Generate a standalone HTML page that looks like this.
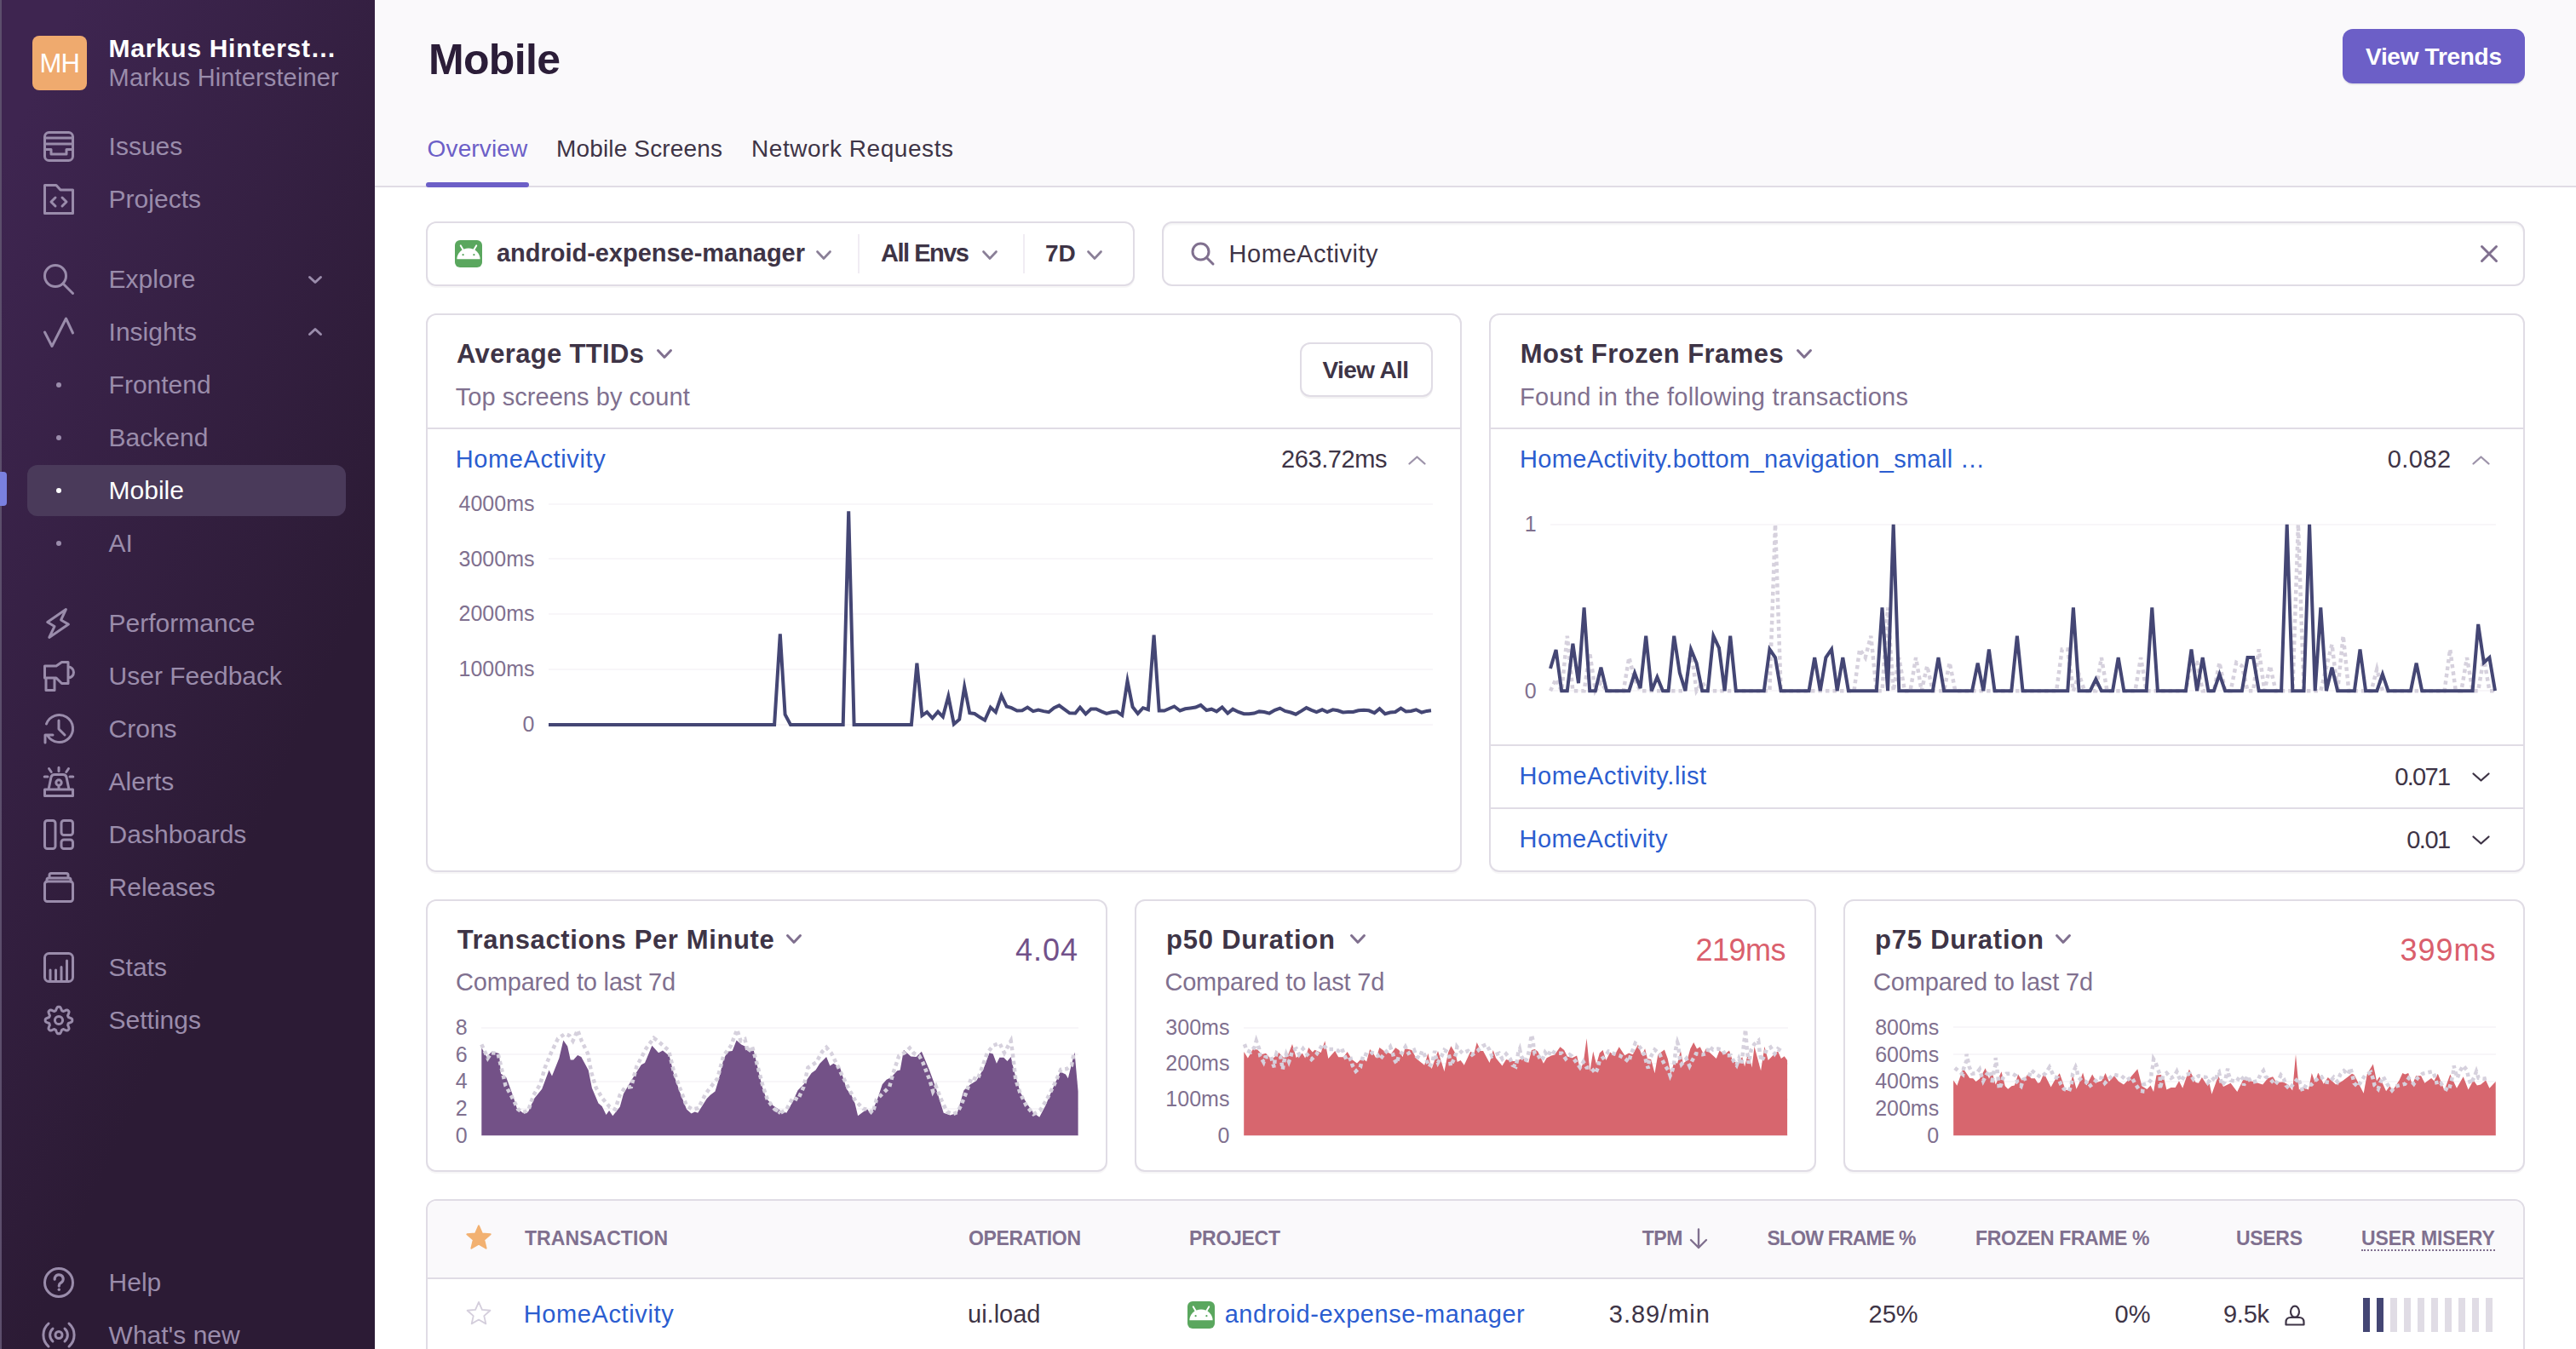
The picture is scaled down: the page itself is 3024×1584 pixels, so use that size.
<!DOCTYPE html>
<html><head><meta charset="utf-8"><style>
html,body{margin:0;padding:0;}
html{overflow:hidden;background:#fff;}
body{width:3024px;height:1584px;overflow:hidden;position:relative;background:#fff;font-family:"Liberation Sans",sans-serif;}
.t{position:absolute;white-space:nowrap;line-height:1;}
</style></head><body>
<div style="position:absolute;left:0px;top:0px;width:440px;height:1584px;background:linear-gradient(294.17deg,#2c1b35 35.57%,#3e2550 92.42%);"></div>
<div style="position:absolute;left:0px;top:0px;width:2px;height:1584px;background:#5c4e6c;"></div>
<div style="position:absolute;left:38px;top:42px;width:64px;height:64px;background:#EFAA6E;border-radius:8px;"></div>
<div class="t" style="top:59.46px;font-size:31px;color:#ffffff;letter-spacing:-0.719px;left:46.50px;">MH</div>
<div class="t" style="top:42.31px;font-size:30px;color:#ffffff;font-weight:700;letter-spacing:0.685px;left:127.60px;">Markus Hinterst…</div>
<div class="t" style="top:77.25px;font-size:29px;color:#9a8cab;letter-spacing:0.132px;left:127.60px;">Markus Hintersteiner</div>
<div style="position:absolute;left:32px;top:546px;width:374px;height:60px;background:#4a3a5a;border-radius:12px;"></div>
<div style="position:absolute;left:0px;top:554px;width:8px;height:40px;background:#7a80e0;border-radius:0 4px 4px 0;"></div>
<div class="t" style="top:156.60px;font-size:30px;color:#9a8cab;left:127.60px;">Issues</div>
<div class="t" style="top:218.60px;font-size:30px;color:#9a8cab;left:127.60px;">Projects</div>
<div class="t" style="top:312.61px;font-size:30px;color:#9a8cab;left:127.60px;">Explore</div>
<div class="t" style="top:374.61px;font-size:30px;color:#9a8cab;left:127.60px;">Insights</div>
<div class="t" style="top:436.61px;font-size:30px;color:#9a8cab;left:127.60px;">Frontend</div>
<div class="t" style="top:498.61px;font-size:30px;color:#9a8cab;left:127.60px;">Backend</div>
<div class="t" style="top:560.61px;font-size:30px;color:#ffffff;left:127.60px;">Mobile</div>
<div class="t" style="top:622.61px;font-size:30px;color:#9a8cab;left:127.60px;">AI</div>
<div class="t" style="top:716.61px;font-size:30px;color:#9a8cab;left:127.60px;">Performance</div>
<div class="t" style="top:778.61px;font-size:30px;color:#9a8cab;left:127.60px;">User Feedback</div>
<div class="t" style="top:840.61px;font-size:30px;color:#9a8cab;left:127.60px;">Crons</div>
<div class="t" style="top:902.61px;font-size:30px;color:#9a8cab;left:127.60px;">Alerts</div>
<div class="t" style="top:964.61px;font-size:30px;color:#9a8cab;left:127.60px;">Dashboards</div>
<div class="t" style="top:1026.61px;font-size:30px;color:#9a8cab;left:127.60px;">Releases</div>
<div class="t" style="top:1120.61px;font-size:30px;color:#9a8cab;left:127.60px;">Stats</div>
<div class="t" style="top:1182.61px;font-size:30px;color:#9a8cab;left:127.60px;">Settings</div>
<div class="t" style="top:1490.61px;font-size:30px;color:#9a8cab;left:127.60px;">Help</div>
<div class="t" style="top:1552.61px;font-size:30px;color:#9a8cab;left:127.60px;">What's new</div>
<div style="position:absolute;left:66px;top:449px;width:6px;height:6px;background:#9a8cab;border-radius:50%;"></div>
<div style="position:absolute;left:66px;top:511px;width:6px;height:6px;background:#9a8cab;border-radius:50%;"></div>
<div style="position:absolute;left:66px;top:573px;width:6px;height:6px;background:#ffffff;border-radius:50%;"></div>
<div style="position:absolute;left:66px;top:635px;width:6px;height:6px;background:#9a8cab;border-radius:50%;"></div>
<div style="position:absolute;left:440px;top:0px;width:2584px;height:218px;background:#FAF9FB;"></div>
<div style="position:absolute;left:440px;top:218px;width:2584px;height:2px;background:#E0DCE5;"></div>
<div class="t" style="top:45.47px;font-size:50px;color:#2B1D38;font-weight:700;letter-spacing:-0.669px;left:503.00px;">Mobile</div>
<div style="position:absolute;left:2750px;top:34px;width:214px;height:64px;background:#6C5FC7;border-radius:12px;box-shadow:0 2px 0 rgba(43,34,51,0.08);"></div>
<div class="t" style="top:52.50px;font-size:28px;color:#ffffff;font-weight:700;letter-spacing:-0.292px;left:2777.00px;">View Trends</div>
<div class="t" style="top:161.30px;font-size:28px;color:#6C5FC7;letter-spacing:0.142px;left:501.60px;">Overview</div>
<div class="t" style="top:161.30px;font-size:28px;color:#3E3446;letter-spacing:0.153px;left:653.00px;">Mobile Screens</div>
<div class="t" style="top:161.30px;font-size:28px;color:#3E3446;letter-spacing:0.547px;left:882.00px;">Network Requests</div>
<div style="position:absolute;left:500px;top:214px;width:121px;height:6px;background:#6C5FC7;border-radius:3px;"></div>
<div style="position:absolute;left:500px;top:260px;width:832px;height:76px;border:2px solid #E0DCE5;border-radius:12px;box-sizing:border-box;background:#fff;box-shadow:0 2px 0 rgba(43,34,51,0.04);"></div>
<svg style="position:absolute;left:534px;top:282px" width="32" height="32" viewBox="0 0 16 16"><rect width="16" height="16" rx="3" fill="#5aa75e"/><path d="M1.2 11.1 A6.8 6.4 0 0 1 14.8 11.1 Z" fill="#fff"/><path d="M5.2 6.3 L3.4 3.2 M10.8 6.3 L12.6 3.2" stroke="#fff" stroke-width="1.0" stroke-linecap="round"/><circle cx="4.8" cy="8.6" r="0.55" fill="#5aa75e"/><circle cx="11.2" cy="8.6" r="0.55" fill="#5aa75e"/></svg>
<div class="t" style="top:283.45px;font-size:29px;color:#3E3446;font-weight:700;letter-spacing:-0.027px;left:583.00px;">android-expense-manager</div>
<div style="position:absolute;left:1007px;top:275px;width:2px;height:46px;background:#F0ECF3;"></div>
<div style="position:absolute;left:1201px;top:275px;width:2px;height:46px;background:#F0ECF3;"></div>
<div class="t" style="top:283.45px;font-size:29px;color:#3E3446;font-weight:700;letter-spacing:-1.491px;left:1034.00px;">All Envs</div>
<div class="t" style="top:284.30px;font-size:28px;color:#3E3446;font-weight:700;left:1227.00px;">7D</div>
<div style="position:absolute;left:1364px;top:260px;width:1600px;height:76px;border:2px solid #E0DCE5;border-radius:12px;box-sizing:border-box;background:#fff;box-shadow:inset 0 2px 2px rgba(43,34,51,0.05);"></div>
<div class="t" style="top:283.95px;font-size:29px;color:#3E3446;letter-spacing:0.528px;left:1442.60px;">HomeActivity</div>
<div style="position:absolute;left:500px;top:368px;width:1216px;height:656px;border:2px solid #E0DCE5;border-radius:12px;box-sizing:border-box;background:#fff;box-shadow:0 2px 0 rgba(43,34,51,0.04);"></div>
<div style="position:absolute;left:1748px;top:368px;width:1216px;height:656px;border:2px solid #E0DCE5;border-radius:12px;box-sizing:border-box;background:#fff;box-shadow:0 2px 0 rgba(43,34,51,0.04);"></div>
<div style="position:absolute;left:502px;top:502px;width:1212px;height:2px;background:#E0DCE5;"></div>
<div style="position:absolute;left:1750px;top:502px;width:1212px;height:2px;background:#E0DCE5;"></div>
<div style="position:absolute;left:1750px;top:874px;width:1212px;height:2px;background:#E0DCE5;"></div>
<div style="position:absolute;left:1750px;top:948px;width:1212px;height:2px;background:#E0DCE5;"></div>
<div class="t" style="top:399.76px;font-size:31px;color:#3E3446;font-weight:700;letter-spacing:0.342px;left:536.00px;">Average TTIDs</div>
<div class="t" style="top:452.15px;font-size:29px;color:#80708F;letter-spacing:0.051px;left:534.70px;">Top screens by count</div>
<div style="position:absolute;left:1526px;top:402px;width:156px;height:64px;border:2px solid #E0DCE5;border-radius:12px;box-sizing:border-box;background:#fff;box-shadow:0 2px 0 rgba(43,34,51,0.06);"></div>
<div class="t" style="top:421.30px;font-size:28px;color:#3E3446;font-weight:700;letter-spacing:-0.621px;left:1552.50px;">View All</div>
<div class="t" style="top:525.45px;font-size:29px;color:#2b5dd0;letter-spacing:0.619px;left:534.70px;">HomeActivity</div>
<div class="t" style="top:525.45px;font-size:29px;color:#3E3446;letter-spacing:-0.406px;right:1395.91px;text-align:right;">263.72ms</div>
<div class="t" style="top:399.76px;font-size:31px;color:#3E3446;font-weight:700;letter-spacing:0.446px;left:1784.70px;">Most Frozen Frames</div>
<div class="t" style="top:452.15px;font-size:29px;color:#80708F;letter-spacing:0.279px;left:1784.00px;">Found in the following transactions</div>
<div class="t" style="top:525.45px;font-size:29px;color:#2b5dd0;letter-spacing:0.354px;left:1784.00px;">HomeActivity.bottom_navigation_small …</div>
<div class="t" style="top:525.45px;font-size:29px;color:#3E3446;letter-spacing:0.484px;right:146.32px;text-align:right;">0.082</div>
<div class="t" style="top:897.35px;font-size:29px;color:#2b5dd0;letter-spacing:0.561px;left:1783.50px;">HomeActivity.list</div>
<div class="t" style="top:898.45px;font-size:29px;color:#3E3446;letter-spacing:-1.641px;right:148.44px;text-align:right;">0.071</div>
<div class="t" style="top:970.75px;font-size:29px;color:#2b5dd0;letter-spacing:0.438px;left:1783.50px;">HomeActivity</div>
<div class="t" style="top:972.45px;font-size:29px;color:#3E3446;letter-spacing:-1.479px;right:148.28px;text-align:right;">0.01</div>
<div style="position:absolute;left:500px;top:1056px;width:800px;height:320px;border:2px solid #E0DCE5;border-radius:12px;box-sizing:border-box;background:#fff;box-shadow:0 2px 0 rgba(43,34,51,0.04);"></div>
<div style="position:absolute;left:1332px;top:1056px;width:800px;height:320px;border:2px solid #E0DCE5;border-radius:12px;box-sizing:border-box;background:#fff;box-shadow:0 2px 0 rgba(43,34,51,0.04);"></div>
<div style="position:absolute;left:2164px;top:1056px;width:800px;height:320px;border:2px solid #E0DCE5;border-radius:12px;box-sizing:border-box;background:#fff;box-shadow:0 2px 0 rgba(43,34,51,0.04);"></div>
<div class="t" style="top:1088.46px;font-size:31px;color:#3E3446;font-weight:700;letter-spacing:0.624px;left:536.70px;">Transactions Per Minute</div>
<div class="t" style="top:1088.46px;font-size:31px;color:#3E3446;font-weight:700;letter-spacing:0.777px;left:1369.00px;">p50 Duration</div>
<div class="t" style="top:1088.46px;font-size:31px;color:#3E3446;font-weight:700;letter-spacing:0.777px;left:2201.00px;">p75 Duration</div>
<div class="t" style="top:1139.45px;font-size:29px;color:#80708F;letter-spacing:-0.174px;left:535.00px;">Compared to last 7d</div>
<div class="t" style="top:1139.45px;font-size:29px;color:#80708F;letter-spacing:-0.174px;left:1367.40px;">Compared to last 7d</div>
<div class="t" style="top:1139.45px;font-size:29px;color:#80708F;letter-spacing:-0.174px;left:2199.00px;">Compared to last 7d</div>
<div class="t" style="top:1097.53px;font-size:36px;color:#72518a;letter-spacing:0.984px;right:1758.02px;text-align:right;">4.04</div>
<div class="t" style="top:1097.53px;font-size:36px;color:#DA5F6D;letter-spacing:-0.508px;right:928.01px;text-align:right;">219ms</div>
<div class="t" style="top:1097.53px;font-size:36px;color:#DA5F6D;letter-spacing:0.992px;right:93.61px;text-align:right;">399ms</div>
<div style="position:absolute;left:500px;top:1408px;width:2464px;height:200px;border:2px solid #E0DCE5;border-radius:12px;box-sizing:border-box;background:#fff;overflow:hidden"><div style="height:90px;background:#FAF9FB;border-bottom:2px solid #E0DCE5"></div></div>
<div class="t" style="top:1443.33px;font-size:23px;color:#80708F;font-weight:700;letter-spacing:0.062px;left:616.00px;">TRANSACTION</div>
<div class="t" style="top:1443.33px;font-size:23px;color:#80708F;font-weight:700;letter-spacing:-0.379px;left:1137.00px;">OPERATION</div>
<div class="t" style="top:1443.33px;font-size:23px;color:#80708F;font-weight:700;letter-spacing:-0.273px;left:1396.00px;">PROJECT</div>
<div class="t" style="top:1443.33px;font-size:23px;color:#80708F;font-weight:700;letter-spacing:-0.817px;left:2074.50px;">SLOW FRAME %</div>
<div class="t" style="top:1443.33px;font-size:23px;color:#80708F;font-weight:700;letter-spacing:-0.388px;left:2319.00px;">FROZEN FRAME %</div>
<div class="t" style="top:1443.33px;font-size:23px;color:#80708F;font-weight:700;letter-spacing:-0.312px;left:2625.00px;">USERS</div>
<div class="t" style="top:1443.33px;font-size:23px;color:#80708F;font-weight:700;letter-spacing:-0.523px;left:1927.80px;">TPM</div>
<div class="t" style="top:1443.33px;font-size:23px;color:#80708F;font-weight:700;letter-spacing:-0.082px;left:2772.00px;">USER MISERY</div>
<div class="t" style="top:1529.45px;font-size:29px;color:#2b5dd0;letter-spacing:0.619px;left:614.70px;">HomeActivity</div>
<div class="t" style="top:1529.45px;font-size:29px;color:#3E3446;left:1136.00px;">ui.load</div>
<div class="t" style="top:1529.45px;font-size:29px;color:#2b5dd0;letter-spacing:0.541px;left:1437.70px;">android-expense-manager</div>
<div class="t" style="top:1529.45px;font-size:29px;color:#3E3446;letter-spacing:0.969px;right:1016.23px;text-align:right;">3.89/min</div>
<div class="t" style="top:1529.45px;font-size:29px;color:#3E3446;right:772.40px;text-align:right;">25%</div>
<div class="t" style="top:1529.45px;font-size:29px;color:#3E3446;right:499.50px;text-align:right;">0%</div>
<div class="t" style="top:1529.45px;font-size:29px;color:#3E3446;letter-spacing:-0.271px;right:360.27px;text-align:right;">9.5k</div>
<div style="position:absolute;left:2774px;top:1524px;width:8px;height:40px;background:#444674;"></div>
<div style="position:absolute;left:2790px;top:1524px;width:8px;height:40px;background:#444674;"></div>
<div style="position:absolute;left:2806px;top:1524px;width:8px;height:40px;background:#E0DCE5;"></div>
<div style="position:absolute;left:2822px;top:1524px;width:8px;height:40px;background:#E0DCE5;"></div>
<div style="position:absolute;left:2838px;top:1524px;width:8px;height:40px;background:#E0DCE5;"></div>
<div style="position:absolute;left:2854px;top:1524px;width:8px;height:40px;background:#E0DCE5;"></div>
<div style="position:absolute;left:2870px;top:1524px;width:8px;height:40px;background:#E0DCE5;"></div>
<div style="position:absolute;left:2886px;top:1524px;width:8px;height:40px;background:#E0DCE5;"></div>
<div style="position:absolute;left:2902px;top:1524px;width:8px;height:40px;background:#E0DCE5;"></div>
<div style="position:absolute;left:2918px;top:1524px;width:8px;height:40px;background:#E0DCE5;"></div>
<div style="position:absolute;left:644px;top:590.5px;width:1038px;height:2px;background:#F8F6F9;"></div>
<div class="t" style="top:578.84px;font-size:25px;color:#80708F;right:2396.50px;text-align:right;">4000ms</div>
<div style="position:absolute;left:644px;top:655.3px;width:1038px;height:2px;background:#F8F6F9;"></div>
<div class="t" style="top:643.64px;font-size:25px;color:#80708F;right:2396.50px;text-align:right;">3000ms</div>
<div style="position:absolute;left:644px;top:720.1px;width:1038px;height:2px;background:#F8F6F9;"></div>
<div class="t" style="top:708.44px;font-size:25px;color:#80708F;right:2396.50px;text-align:right;">2000ms</div>
<div style="position:absolute;left:644px;top:784.9px;width:1038px;height:2px;background:#F8F6F9;"></div>
<div class="t" style="top:773.24px;font-size:25px;color:#80708F;right:2396.50px;text-align:right;">1000ms</div>
<div style="position:absolute;left:644px;top:849.7px;width:1038px;height:2px;background:#F8F6F9;"></div>
<div class="t" style="top:838.04px;font-size:25px;color:#80708F;right:2396.50px;text-align:right;">0</div>
<svg style="position:absolute;left:0;top:0" width="3024" height="1584"><polyline points="644.0,850.9 909.1,850.9 915.8,744.4 921.6,839.0 928.0,850.9 989.7,850.9 996.2,600.4 1002.6,850.9 1069.9,850.9 1076.4,778.8 1082.4,840.1 1088.2,836.2 1094.6,843.3 1101.1,835.8 1106.9,841.6 1113.3,817.5 1119.8,850.2 1126.2,844.8 1132.2,806.4 1138.3,837.3 1144.1,838.0 1150.5,842.3 1156.1,845.7 1162.8,830.6 1168.9,836.2 1175.6,816.7 1181.7,829.5 1187.3,831.2 1193.9,834.5 1200.0,834.3 1206.2,830.6 1212.8,835.1 1218.9,833.6 1225.1,835.1 1231.2,836.2 1237.3,831.2 1243.4,828.4 1249.5,832.9 1255.6,837.3 1262.3,837.5 1267.9,830.6 1274.5,838.4 1280.7,832.5 1286.8,832.5 1292.9,835.4 1299.0,837.9 1305.1,836.2 1311.2,835.6 1317.3,839.8 1323.5,799.5 1329.6,830.1 1335.7,837.9 1341.8,831.2 1347.9,833.2 1354.6,745.6 1360.7,834.5 1366.8,834.5 1372.6,832.0 1378.5,829.5 1385.2,834.5 1391.3,832.3 1397.4,831.5 1403.5,830.6 1409.6,827.9 1416.3,834.0 1422.2,832.7 1428.2,835.4 1434.7,830.5 1441.2,837.6 1447.2,832.7 1453.7,836.0 1460.2,838.2 1466.2,838.2 1472.2,837.6 1478.2,835.4 1484.1,836.0 1490.1,837.6 1496.6,833.8 1502.6,831.6 1508.6,834.9 1515.1,836.5 1521.1,838.7 1527.6,834.9 1533.6,831.1 1539.6,833.8 1545.5,836.0 1552.1,833.3 1558.0,836.0 1564.6,833.3 1570.5,834.3 1576.5,836.5 1582.5,836.0 1588.5,836.0 1594.5,834.3 1601.0,833.8 1607.0,834.3 1613.5,837.1 1619.5,832.2 1626.0,838.2 1632.0,836.5 1637.9,836.0 1644.5,831.6 1650.4,835.4 1656.4,834.9 1662.4,833.3 1668.9,836.5 1674.9,834.9 1680.0,834.3" fill="none" stroke="#444674" stroke-width="4" stroke-linejoin="miter" stroke-miterlimit="10"/></svg>
<div style="position:absolute;left:1820px;top:614.8px;width:1110px;height:2px;background:#F8F6F9;"></div>
<div class="t" style="top:603.14px;font-size:25px;color:#80708F;right:1220.40px;text-align:right;">1</div>
<div style="position:absolute;left:1820px;top:810.2px;width:1110px;height:2px;background:#F8F6F9;"></div>
<div class="t" style="top:798.54px;font-size:25px;color:#80708F;right:1220.40px;text-align:right;">0</div>
<svg style="position:absolute;left:0;top:0" width="3024" height="1584"><polyline points="1820.0,811.2 1826.6,797.5 1833.2,811.2 1839.8,746.7 1846.4,811.2 1853.0,811.2 1859.6,811.2 1866.2,766.3 1872.8,811.2 1879.4,801.4 1886.0,811.2 1892.6,811.2 1899.2,811.2 1905.8,811.2 1912.4,772.1 1919.0,797.5 1925.6,811.2 1932.2,811.2 1938.8,811.2 1945.4,811.2 1952.0,811.2 1958.6,811.2 1965.2,811.2 1971.8,811.2 1978.4,811.2 1985.0,762.4 1991.6,811.2 1998.2,801.4 2004.8,811.2 2011.4,811.2 2018.0,811.2 2024.6,811.2 2031.2,811.2 2037.8,811.2 2044.4,811.2 2051.0,811.2 2057.6,811.2 2064.2,811.2 2070.8,811.2 2077.4,811.2 2084.0,615.8 2090.6,811.2 2097.2,811.2 2103.8,811.2 2110.4,811.2 2117.0,811.2 2123.6,811.2 2130.2,811.2 2136.8,811.2 2143.4,811.2 2150.1,811.2 2156.7,811.2 2163.3,811.2 2169.9,811.2 2176.5,811.2 2183.1,762.4 2189.7,772.1 2196.3,746.7 2202.9,811.2 2209.5,811.2 2216.1,713.5 2222.7,811.2 2229.3,772.1 2235.9,811.2 2242.5,811.2 2249.1,772.1 2255.7,811.2 2262.3,781.9 2268.9,811.2 2275.5,811.2 2282.1,811.2 2288.7,778.0 2295.3,811.2 2301.9,811.2 2308.5,811.2 2315.1,811.2 2321.7,811.2 2328.3,811.2 2334.9,811.2 2341.5,811.2 2348.1,811.2 2354.7,811.2 2361.3,811.2 2367.9,811.2 2374.5,811.2 2381.1,811.2 2387.7,811.2 2394.3,811.2 2400.9,811.2 2407.5,811.2 2414.1,811.2 2420.7,762.4 2427.3,762.4 2433.9,811.2 2440.5,791.7 2447.1,811.2 2453.7,811.2 2460.3,811.2 2466.9,772.1 2473.5,811.2 2480.1,811.2 2486.7,811.2 2493.3,811.2 2499.9,811.2 2506.5,811.2 2513.1,772.1 2519.7,811.2 2526.3,811.2 2532.9,811.2 2539.5,811.2 2546.1,811.2 2552.7,811.2 2559.3,811.2 2565.9,811.2 2572.5,778.0 2579.1,778.0 2585.7,811.2 2592.3,811.2 2598.9,811.2 2605.5,778.0 2612.1,811.2 2618.7,811.2 2625.3,778.0 2631.9,781.9 2638.5,811.2 2645.1,811.2 2651.7,762.4 2658.3,811.2 2664.9,781.9 2671.5,811.2 2678.1,811.2 2684.7,811.2 2691.3,811.2 2697.9,615.8 2704.5,811.2 2711.1,811.2 2717.7,811.2 2724.3,811.2 2730.9,783.8 2737.5,756.5 2744.1,811.2 2750.7,746.7 2757.3,811.2 2763.9,811.2 2770.5,811.2 2777.1,811.2 2783.7,811.2 2790.3,785.8 2796.9,811.2 2803.5,811.2 2810.2,811.2 2816.8,811.2 2823.4,811.2 2830.0,811.2 2836.6,811.2 2843.2,811.2 2849.8,811.2 2856.4,811.2 2863.0,811.2 2869.6,811.2 2876.2,762.4 2882.8,811.2 2889.4,811.2 2896.0,772.1 2902.6,811.2 2909.2,811.2 2915.8,772.1 2922.4,811.2 2929.0,811.2" fill="none" stroke="#D6D1DD" stroke-width="4.5" stroke-dasharray="4.5 4"/><polyline points="1820.0,785.0 1826.6,763.1 1833.2,811.2 1839.8,811.2 1846.4,755.7 1853.0,802.2 1859.6,713.5 1866.2,811.2 1872.8,811.2 1879.4,783.8 1886.0,811.2 1892.6,811.2 1899.2,811.2 1905.8,811.2 1912.4,811.2 1919.0,790.1 1925.6,808.1 1932.2,746.7 1938.8,811.2 1945.4,795.0 1952.0,811.2 1958.6,811.2 1965.2,746.7 1971.8,790.1 1978.4,811.2 1985.0,762.4 1991.6,778.6 1998.2,811.2 2004.8,811.2 2011.4,746.7 2018.0,760.8 2024.6,811.2 2031.2,746.7 2037.8,811.2 2044.4,811.2 2051.0,811.2 2057.6,811.2 2064.2,811.2 2070.8,811.2 2077.4,762.4 2084.0,772.1 2090.6,811.2 2097.2,811.2 2103.8,811.2 2110.4,811.2 2117.0,811.2 2123.6,811.2 2130.2,772.1 2136.8,811.2 2143.4,772.1 2150.1,762.4 2156.7,811.2 2163.3,772.1 2169.9,811.2 2176.5,811.2 2183.1,811.2 2189.7,811.2 2196.3,811.2 2202.9,811.2 2209.5,713.5 2216.1,811.2 2222.7,615.8 2229.3,811.2 2235.9,811.2 2242.5,811.2 2249.1,811.2 2255.7,811.2 2262.3,811.2 2268.9,811.2 2275.5,772.1 2282.1,811.2 2288.7,811.2 2295.3,811.2 2301.9,811.2 2308.5,811.2 2315.1,811.2 2321.7,778.6 2328.3,811.2 2334.9,762.4 2341.5,811.2 2348.1,811.2 2354.7,811.2 2361.3,811.2 2367.9,746.7 2374.5,811.2 2381.1,811.2 2387.7,811.2 2394.3,811.2 2400.9,811.2 2407.5,811.2 2414.1,811.2 2420.7,811.2 2427.3,811.2 2433.9,713.5 2440.5,811.2 2447.1,811.2 2453.7,811.2 2460.3,797.5 2466.9,811.2 2473.5,811.2 2480.1,811.2 2486.7,772.1 2493.3,811.2 2499.9,811.2 2506.5,811.2 2513.1,811.2 2519.7,811.2 2526.3,713.5 2532.9,811.2 2539.5,811.2 2546.1,811.2 2552.7,811.2 2559.3,811.2 2565.9,811.2 2572.5,762.4 2579.1,811.2 2585.7,772.1 2592.3,811.2 2598.9,811.2 2605.5,791.7 2612.1,811.2 2618.7,811.2 2625.3,811.2 2631.9,811.2 2638.5,772.1 2645.1,772.1 2651.7,811.2 2658.3,811.2 2664.9,811.2 2671.5,811.2 2678.1,811.2 2684.7,615.8 2691.3,811.2 2697.9,811.2 2704.5,811.2 2711.1,615.8 2717.7,811.2 2724.3,713.5 2730.9,811.2 2737.5,783.8 2744.1,811.2 2750.7,811.2 2757.3,811.2 2763.9,811.2 2770.5,762.4 2777.1,811.2 2783.7,811.2 2790.3,811.2 2796.9,791.7 2803.5,811.2 2810.2,811.2 2816.8,811.2 2823.4,811.2 2830.0,811.2 2836.6,778.6 2843.2,811.2 2849.8,811.2 2856.4,811.2 2863.0,811.2 2869.6,811.2 2876.2,811.2 2882.8,811.2 2889.4,811.2 2896.0,811.2 2902.6,811.2 2909.2,733.0 2915.8,778.0 2922.4,772.1 2929.0,811.2" fill="none" stroke="#444674" stroke-width="4" stroke-linejoin="miter"/></svg>
<div style="position:absolute;left:565px;top:1205.6px;width:701px;height:2px;background:#F8F6F9;"></div>
<div class="t" style="top:1193.94px;font-size:25px;color:#80708F;right:2475.40px;text-align:right;">8</div>
<div style="position:absolute;left:565px;top:1237.3px;width:701px;height:2px;background:#F8F6F9;"></div>
<div class="t" style="top:1225.64px;font-size:25px;color:#80708F;right:2475.40px;text-align:right;">6</div>
<div style="position:absolute;left:565px;top:1268.9px;width:701px;height:2px;background:#F8F6F9;"></div>
<div class="t" style="top:1257.24px;font-size:25px;color:#80708F;right:2475.40px;text-align:right;">4</div>
<div style="position:absolute;left:565px;top:1300.6px;width:701px;height:2px;background:#F8F6F9;"></div>
<div class="t" style="top:1288.94px;font-size:25px;color:#80708F;right:2475.40px;text-align:right;">2</div>
<div style="position:absolute;left:565px;top:1332.2px;width:701px;height:2px;background:#F8F6F9;"></div>
<div class="t" style="top:1320.54px;font-size:25px;color:#80708F;right:2475.40px;text-align:right;">0</div>
<svg style="position:absolute;left:0;top:0" width="3024" height="1584"><polygon points="565.3,1333.2 565.3,1229.9 571.2,1241.1 577.5,1234.8 585.9,1236.9 588.0,1260.7 594.2,1264.9 601.9,1285.8 606.8,1301.2 613.8,1306.8 620.1,1305.4 627.1,1290.0 636.2,1278.8 644.5,1256.5 648.0,1263.5 656.4,1242.5 661.3,1221.6 666.2,1228.5 669.7,1244.6 673.2,1244.6 678.1,1239.0 682.3,1241.1 690.7,1256.5 694.9,1277.4 702.5,1295.6 706.7,1299.1 711.6,1308.9 715.1,1304.0 719.3,1310.3 727.7,1299.8 731.9,1284.4 741.7,1267.7 752.8,1250.2 757.0,1248.1 765.4,1227.8 773.1,1236.2 778.0,1233.4 785.7,1239.7 792.0,1264.9 798.3,1283.0 806.0,1302.6 811.5,1307.5 815.7,1305.4 819.2,1306.8 829.7,1290.0 833.9,1285.8 839.5,1281.6 843.7,1267.7 849.3,1243.9 854.2,1234.8 859.7,1234.1 864.6,1221.6 870.2,1226.4 874.4,1228.5 881.4,1232.0 884.9,1234.1 894.7,1276.0 899.6,1290.0 908.0,1298.4 916.3,1304.0 923.3,1306.8 929.6,1295.6 936.6,1280.2 943.5,1273.3 952.6,1260.0 957.5,1256.5 962.4,1248.8 970.1,1241.1 974.3,1251.6 978.5,1248.8 986.2,1253.7 993.8,1278.8 999.4,1285.8 1003.6,1295.6 1007.1,1310.3 1013.4,1305.4 1018.3,1302.6 1022.5,1308.9 1030.2,1290.0 1035.8,1273.3 1040.7,1267.7 1046.2,1264.9 1053.2,1257.2 1056.7,1256.5 1060.9,1232.7 1069.3,1240.4 1075.6,1241.1 1081.9,1234.8 1091.0,1256.5 1098.7,1277.4 1107.7,1306.8 1115.4,1309.6 1123.8,1306.8 1131.5,1280.2 1139.2,1273.3 1146.2,1269.1 1154.6,1255.1 1161.5,1236.2 1165.7,1237.6 1169.9,1248.8 1173.4,1241.8 1178.3,1241.8 1182.5,1246.0 1186.7,1241.1 1190.9,1259.3 1197.9,1283.0 1206.3,1297.0 1213.2,1306.8 1220.2,1311.7 1227.2,1298.4 1235.6,1278.8 1244.7,1258.6 1251.0,1261.4 1253.8,1266.3 1261.5,1235.5 1265.6,1281.6 1265.6,1333.2" fill="#735187"/><polyline points="565.3,1226.4 572.6,1242.5 576.8,1236.2 584.5,1236.9 587.9,1250.9 593.5,1274.7 600.5,1287.2 608.2,1302.6 613.8,1306.1 620.1,1304.0 626.4,1285.8 634.1,1273.3 639.7,1253.7 646.6,1236.9 655.0,1219.5 663.4,1213.9 668.3,1216.0 672.5,1222.2 678.1,1209.7 683.0,1222.9 690.0,1236.9 694.2,1259.3 699.7,1277.4 707.4,1290.0 715.8,1299.8 722.1,1302.6 727.7,1285.8 733.3,1277.4 741.0,1276.1 747.3,1252.3 758.4,1231.3 767.5,1218.8 773.8,1223.6 785.0,1233.4 790.6,1256.5 797.6,1276.1 805.9,1298.4 812.9,1302.6 819.9,1301.2 828.3,1284.4 836.7,1273.3 842.3,1266.3 849.3,1239.7 857.7,1228.5 865.3,1209.0 869.5,1222.2 874.4,1220.2 877.9,1235.5 882.8,1228.5 888.4,1248.1 895.4,1274.7 901.0,1291.4 909.4,1302.6 916.3,1306.8 910.0,1302.6 916.3,1306.8 923.3,1302.6 931.0,1288.6 936.6,1291.4 943.5,1276.1 948.4,1253.7 958.2,1247.4 965.2,1234.8 970.1,1229.9 975.7,1236.2 982.7,1250.2 989.7,1264.9 996.6,1278.8 1004.3,1292.8 1013.4,1301.9 1019.0,1302.6 1024.6,1306.8 1028.8,1291.4 1038.6,1281.6 1044.2,1276.1 1048.3,1260.7 1055.3,1239.7 1063.0,1235.5 1067.9,1230.6 1072.8,1236.9 1079.1,1239.7 1083.3,1247.4 1091.7,1269.1 1095.2,1281.6 1098.7,1275.4 1105.6,1292.8 1111.9,1305.4 1118.2,1308.2 1123.8,1306.1 1128.0,1298.4 1133.6,1284.4 1140.6,1264.9 1147.6,1267.7 1153.9,1250.9 1158.7,1236.9 1165.7,1227.8 1173.4,1225.0 1179.0,1236.2 1186.7,1222.2 1188.8,1236.9 1192.3,1267.7 1197.9,1284.4 1204.9,1298.4 1213.2,1308.2 1220.9,1304.0 1228.6,1291.4 1237.7,1273.3 1245.4,1255.8 1252.4,1255.1 1258.0,1250.9 1260.8,1235.5" fill="none" stroke="#D6D1DD" stroke-width="4.5" stroke-dasharray="4.5 4"/></svg>
<div style="position:absolute;left:1460px;top:1205.6px;width:639px;height:2px;background:#F8F6F9;"></div>
<div class="t" style="top:1193.94px;font-size:25px;color:#80708F;right:1580.60px;text-align:right;">300ms</div>
<div style="position:absolute;left:1460px;top:1247.8px;width:639px;height:2px;background:#F8F6F9;"></div>
<div class="t" style="top:1236.14px;font-size:25px;color:#80708F;right:1580.60px;text-align:right;">200ms</div>
<div style="position:absolute;left:1460px;top:1290px;width:639px;height:2px;background:#F8F6F9;"></div>
<div class="t" style="top:1278.34px;font-size:25px;color:#80708F;right:1580.60px;text-align:right;">100ms</div>
<div style="position:absolute;left:1460px;top:1332.2px;width:639px;height:2px;background:#F8F6F9;"></div>
<div class="t" style="top:1320.54px;font-size:25px;color:#80708F;right:1580.60px;text-align:right;">0</div>
<svg style="position:absolute;left:0;top:0" width="3024" height="1584"><polygon points="1460.2,1333.2 1460.3,1235.0 1464.9,1242.6 1470.8,1232.1 1476.1,1232.4 1481.4,1238.0 1486.0,1236.7 1490.6,1242.0 1495.3,1242.0 1501.2,1236.0 1507.1,1242.0 1511.8,1239.3 1517.0,1226.1 1521.7,1242.0 1528.9,1236.7 1532.2,1242.6 1536.2,1230.1 1540.8,1235.4 1543.4,1232.7 1550.7,1236.0 1555.3,1222.2 1559.3,1243.0 1567.2,1234.0 1571.2,1241.3 1577.1,1241.3 1581.7,1235.0 1587.0,1243.9 1593.0,1248.6 1598.9,1242.3 1604.2,1246.6 1608.1,1232.1 1612.1,1236.7 1615.4,1242.6 1619.4,1230.1 1624.7,1233.9 1633.0,1237.6 1638.2,1230.2 1642.4,1233.0 1646.6,1241.3 1649.3,1231.1 1657.3,1233.0 1662.9,1243.2 1672.2,1250.7 1676.4,1236.7 1680.6,1255.3 1688.0,1233.9 1695.5,1258.1 1700.1,1235.7 1703.4,1228.3 1708.5,1236.7 1710.8,1246.9 1714.6,1245.1 1718.8,1250.7 1726.2,1234.8 1730.4,1237.1 1733.7,1224.1 1738.3,1233.9 1741.1,1233.9 1748.6,1247.9 1752.8,1233.0 1756.0,1242.3 1763.5,1251.6 1768.1,1244.1 1774.7,1246.0 1780.3,1246.0 1787.7,1242.3 1794.2,1247.9 1798.0,1233.0 1801.7,1232.0 1805.4,1234.8 1811.9,1248.8 1815.7,1242.3 1821.2,1239.5 1825.0,1238.5 1831.5,1229.2 1836.2,1233.0 1839.9,1240.4 1845.5,1242.3 1851.1,1239.5 1855.0,1256.4 1858.8,1247.8 1862.6,1219.3 1866.4,1258.3 1870.2,1234.5 1874.0,1249.7 1877.8,1236.4 1881.6,1233.1 1885.4,1245.0 1890.2,1235.4 1895.0,1239.7 1900.7,1229.3 1907.3,1239.2 1912.1,1236.4 1916.8,1238.3 1923.0,1226.4 1927.3,1239.2 1931.1,1231.2 1933.9,1243.0 1938.2,1244.0 1942.5,1260.2 1946.3,1238.3 1953.9,1232.6 1957.7,1243.0 1961.5,1261.1 1965.3,1246.8 1969.1,1248.8 1972.9,1233.5 1975.8,1248.8 1980.5,1245.0 1984.3,1231.6 1988.2,1224.0 1992.0,1231.6 1995.8,1229.3 1999.6,1237.3 2002.9,1231.2 2007.2,1235.9 2014.8,1243.0 2018.6,1233.5 2024.3,1238.3 2030.0,1233.5 2033.8,1245.0 2039.5,1248.8 2045.2,1241.1 2048.1,1252.6 2052.4,1235.4 2056.6,1253.5 2059.5,1228.8 2067.1,1257.3 2071.4,1228.8 2075.7,1245.0 2083.3,1237.3 2087.1,1234.5 2090.9,1243.0 2094.7,1240.2 2098.1,1245.0 2098.1,1333.2" fill="#D7666E"/><polyline points="1460.9,1226.1 1463.6,1233.4 1468.2,1235.4 1472.8,1229.4 1474.8,1222.2 1478.1,1231.4 1479.4,1240.0 1483.4,1247.2 1485.4,1241.3 1492.0,1240.6 1494.6,1249.9 1495.9,1253.2 1496.6,1243.9 1498.6,1236.7 1503.2,1240.6 1505.8,1255.8 1507.1,1247.2 1509.8,1238.0 1513.1,1246.6 1515.1,1241.3 1517.0,1233.4 1521.7,1231.4 1525.0,1238.0 1529.6,1231.4 1534.2,1238.0 1539.5,1243.9 1545.4,1238.0 1550.0,1230.7 1552.7,1226.1 1558.0,1232.1 1565.9,1232.1 1571.2,1234.0 1575.1,1230.7 1577.8,1238.0 1581.1,1245.3 1585.7,1243.3 1587.7,1251.2 1591.6,1257.8 1596.9,1253.2 1598.9,1244.6 1600.9,1237.3 1606.8,1239.3 1610.8,1236.0 1616.7,1238.0 1620.0,1243.9 1624.0,1238.7 1623.7,1238.5 1629.3,1233.0 1632.1,1229.2 1634.9,1236.7 1636.8,1244.1 1639.6,1248.8 1641.9,1240.4 1646.1,1235.7 1649.8,1229.2 1653.5,1236.7 1660.1,1233.0 1662.9,1240.4 1666.6,1242.3 1669.4,1233.9 1672.2,1238.5 1675.0,1246.0 1677.8,1252.5 1681.5,1246.9 1684.3,1233.9 1685.2,1240.4 1688.0,1247.9 1691.7,1241.3 1695.5,1233.0 1700.1,1235.7 1702.0,1243.2 1702.9,1251.6 1706.6,1244.1 1709.4,1236.7 1710.4,1229.2 1713.2,1233.0 1716.9,1236.7 1723.4,1233.9 1728.1,1238.5 1734.6,1233.9 1740.2,1228.3 1744.8,1226.4 1748.6,1233.0 1751.4,1240.4 1755.1,1238.5 1759.8,1236.7 1763.5,1243.2 1768.1,1237.6 1772.8,1243.2 1775.6,1250.7 1779.3,1252.5 1781.2,1244.1 1782.1,1236.7 1784.0,1232.0 1785.8,1240.4 1790.5,1246.9 1793.3,1241.3 1795.2,1233.0 1796.1,1225.5 1798.0,1215.2 1799.8,1222.7 1800.3,1230.2 1801.7,1237.6 1805.4,1238.5 1809.1,1245.1 1811.0,1243.2 1813.8,1235.7 1817.5,1240.4 1820.3,1233.0 1824.0,1235.7 1829.6,1236.7 1833.4,1236.7 1838.0,1243.2 1842.7,1238.5 1845.5,1240.4 1850.1,1246.9 1854.8,1253.4 1858.8,1246.8 1862.6,1253.5 1867.4,1253.5 1873.1,1260.2 1875.9,1253.5 1877.8,1244.9 1883.5,1241.1 1888.3,1234.5 1894.9,1237.3 1900.7,1239.2 1906.4,1242.1 1912.1,1246.8 1914.0,1240.2 1916.8,1232.6 1919.7,1225.0 1923.5,1227.8 1928.2,1233.5 1931.1,1241.1 1933.0,1248.8 1934.9,1254.5 1935.8,1246.8 1938.7,1239.2 1942.5,1232.6 1948.2,1237.3 1951.1,1244.0 1954.9,1251.6 1958.7,1257.3 1960.6,1263.0 1963.4,1256.4 1965.3,1247.8 1966.3,1240.2 1967.2,1231.6 1969.1,1224.0 1970.1,1226.9 1971.0,1235.4 1972.0,1243.0 1973.9,1249.7 1979.6,1243.0 1983.4,1251.6 1987.2,1244.0 1991.0,1237.3 1998.6,1238.3 2004.3,1236.4 2006.2,1228.8 2011.0,1232.6 2016.7,1231.6 2022.4,1232.6 2025.2,1239.2 2031.9,1239.2 2035.7,1246.8 2038.6,1250.7 2041.4,1243.0 2044.3,1249.7 2045.2,1242.1 2046.2,1234.5 2047.1,1225.9 2048.1,1218.3 2049.0,1208.8 2050.9,1233.5 2051.9,1241.1 2052.8,1248.8 2055.7,1232.6 2059.5,1225.9 2064.2,1222.1 2065.2,1230.7 2066.1,1238.3 2068.0,1245.9 2070.9,1240.2 2073.8,1232.6 2078.5,1229.7 2083.3,1237.3 2087.1,1231.6 2091.8,1234.5" fill="none" stroke="#D6D1DD" stroke-width="4.5" stroke-dasharray="4.5 4"/></svg>
<div style="position:absolute;left:2293px;top:1205.3px;width:637px;height:2px;background:#F8F6F9;"></div>
<div class="t" style="top:1193.64px;font-size:25px;color:#80708F;right:747.80px;text-align:right;">800ms</div>
<div style="position:absolute;left:2293px;top:1237.3px;width:637px;height:2px;background:#F8F6F9;"></div>
<div class="t" style="top:1225.64px;font-size:25px;color:#80708F;right:747.80px;text-align:right;">600ms</div>
<div style="position:absolute;left:2293px;top:1269px;width:637px;height:2px;background:#F8F6F9;"></div>
<div class="t" style="top:1257.34px;font-size:25px;color:#80708F;right:747.80px;text-align:right;">400ms</div>
<div style="position:absolute;left:2293px;top:1300.7px;width:637px;height:2px;background:#F8F6F9;"></div>
<div class="t" style="top:1289.04px;font-size:25px;color:#80708F;right:747.80px;text-align:right;">200ms</div>
<div style="position:absolute;left:2293px;top:1332.2px;width:637px;height:2px;background:#F8F6F9;"></div>
<div class="t" style="top:1320.54px;font-size:25px;color:#80708F;right:747.80px;text-align:right;">0</div>
<svg style="position:absolute;left:0;top:0" width="3024" height="1584"><polygon points="2293.2,1333.2 2293.1,1268.4 2297.4,1274.8 2303.8,1256.5 2306.4,1257.3 2312.3,1265.9 2316.2,1266.3 2319.6,1270.1 2323.9,1266.7 2330.7,1254.3 2335.0,1266.7 2338.4,1258.6 2342.7,1273.6 2349.5,1258.2 2353.8,1275.3 2357.2,1278.7 2361.4,1275.3 2364.9,1274.4 2369.1,1261.6 2373.4,1268.4 2376.8,1267.6 2380.2,1261.6 2384.5,1266.3 2388.8,1266.3 2392.2,1271.8 2394.8,1271.0 2399.5,1260.3 2407.6,1276.5 2413.5,1265.9 2417.8,1260.3 2424.6,1279.5 2428.9,1280.4 2433.2,1262.5 2437.5,1278.7 2440.9,1271.8 2445.1,1259.5 2449.4,1274.4 2456.2,1261.6 2461.4,1271.0 2467.3,1268.9 2471.6,1259.9 2475.9,1270.1 2481.9,1263.3 2487.0,1269.7 2493.0,1273.6 2498.9,1267.6 2509.3,1255.2 2514.4,1275.3 2520.4,1279.1 2524.6,1274.4 2528.1,1282.1 2531.5,1262.5 2536.6,1262.0 2540.0,1265.0 2543.4,1279.5 2548.6,1277.0 2553.7,1277.0 2558.0,1269.3 2562.2,1277.8 2569.9,1255.6 2577.6,1271.0 2581.0,1271.8 2584.9,1265.0 2590.4,1273.6 2593.8,1272.7 2596.4,1284.7 2604.1,1263.3 2610.0,1276.1 2618.6,1271.8 2626.3,1282.1 2634.0,1266.3 2641.6,1269.3 2648.5,1271.0 2656.2,1273.6 2662.1,1266.3 2668.1,1264.2 2672.4,1271.0 2680.1,1270.6 2686.1,1273.6 2691.2,1280.4 2695.0,1238.1 2698.9,1279.5 2704.0,1277.0 2710.0,1279.5 2713.8,1259.9 2717.7,1271.0 2721.1,1259.9 2721.7,1260.3 2727.7,1272.7 2732.8,1265.0 2742.2,1273.6 2749.9,1269.3 2761.0,1260.7 2763.6,1262.0 2774.7,1283.8 2778.9,1260.7 2785.8,1249.6 2790.0,1269.3 2793.4,1264.2 2801.1,1281.2 2805.4,1275.3 2808.8,1280.4 2816.5,1268.4 2820.4,1259.9 2823.3,1261.6 2827.2,1259.9 2831.9,1273.6 2836.1,1263.3 2842.1,1263.3 2846.4,1271.8 2854.1,1265.9 2857.5,1269.3 2861.8,1260.7 2869.5,1280.4 2876.3,1261.6 2884.0,1277.8 2891.7,1264.2 2897.6,1279.5 2903.6,1268.4 2907.9,1274.4 2912.2,1273.6 2918.1,1268.4 2922.4,1277.8 2929.7,1270.1 2929.8,1333.2" fill="#D7666E"/><polyline points="2294.8,1253.9 2300.0,1258.2 2304.2,1261.6 2305.1,1254.8 2308.5,1245.4 2308.5,1237.7 2311.9,1253.1 2315.3,1260.7 2320.5,1259.9 2323.9,1255.6 2326.4,1264.2 2328.1,1269.3 2331.6,1262.5 2335.8,1257.3 2337.5,1263.3 2339.2,1265.9 2338.4,1272.7 2341.0,1256.5 2342.7,1249.6 2342.7,1242.0 2344.4,1254.8 2345.2,1262.5 2346.1,1270.1 2346.9,1278.7 2349.5,1272.7 2351.2,1265.9 2355.5,1260.7 2362.3,1260.7 2366.6,1263.3 2368.3,1271.0 2372.6,1275.3 2375.1,1267.6 2379.4,1265.9 2381.9,1264.2 2384.5,1256.5 2389.6,1260.7 2395.6,1265.0 2401.6,1259.9 2405.9,1253.1 2408.4,1258.2 2411.0,1264.2 2416.1,1265.9 2419.5,1273.6 2422.9,1278.7 2428.9,1281.2 2431.5,1274.4 2432.3,1268.4 2433.2,1260.7 2436.6,1253.1 2438.3,1257.3 2439.2,1264.2 2444.3,1269.3 2448.6,1270.1 2452.0,1276.1 2458.0,1271.8 2463.1,1265.0 2467.3,1265.9 2470.8,1271.8 2475.0,1267.6 2481.0,1261.6 2484.4,1262.5 2490.4,1263.3 2496.4,1268.4 2502.4,1265.0 2506.7,1272.7 2511.8,1280.4 2515.2,1281.2 2516.1,1273.6 2522.1,1271.8 2525.5,1267.6 2525.5,1259.9 2527.2,1252.2 2528.1,1243.7 2530.6,1247.9 2533.2,1255.6 2535.7,1262.5 2535.7,1271.8 2535.7,1278.7 2539.2,1263.3 2543.4,1259.9 2548.6,1265.9 2552.8,1263.3 2555.4,1258.2 2558.0,1265.0 2560.5,1269.3 2564.8,1262.5 2570.8,1260.7 2575.0,1267.6 2581.0,1263.3 2589.6,1265.0 2592.1,1271.0 2596.4,1265.0 2600.7,1269.3 2603.2,1260.7 2604.9,1259.0 2606.6,1266.7 2608.3,1274.4 2611.8,1270.1 2615.2,1254.8 2616.0,1260.7 2618.6,1268.4 2625.4,1270.1 2629.7,1263.3 2633.1,1266.7 2634.0,1274.4 2638.2,1263.3 2642.5,1271.0 2650.2,1269.3 2653.6,1261.6 2657.0,1257.3 2659.6,1264.2 2665.6,1267.6 2670.7,1273.6 2674.1,1269.3 2677.5,1262.5 2680.9,1266.7 2683.5,1274.4 2687.8,1278.7 2692.9,1271.8 2698.0,1265.9 2700.6,1273.6 2703.1,1281.2 2707.4,1273.6 2713.4,1273.6 2718.5,1268.4 2723.6,1264.2 2725.1,1264.2 2728.5,1270.1 2734.5,1271.0 2739.6,1265.0 2743.9,1270.1 2747.3,1261.6 2751.6,1257.3 2756.7,1261.6 2759.3,1253.9 2761.8,1264.2 2763.6,1271.8 2767.8,1276.1 2772.1,1269.3 2776.4,1262.5 2783.2,1259.0 2785.8,1266.7 2787.5,1274.4 2791.7,1278.7 2794.3,1271.0 2797.7,1264.2 2802.8,1273.6 2808.0,1280.4 2811.4,1276.1 2816.5,1274.4 2823.3,1272.7 2827.6,1265.9 2833.6,1272.7 2837.9,1265.9 2843.8,1260.7 2851.5,1259.0 2855.8,1258.2 2859.2,1265.9 2860.9,1273.6 2865.2,1271.8 2869.5,1277.8 2874.6,1280.4 2878.0,1268.4 2879.7,1260.7 2880.6,1251.4 2882.3,1258.2 2884.8,1265.9 2887.4,1258.2 2891.7,1251.4 2895.9,1256.5 2897.6,1264.2 2900.2,1272.7 2904.5,1265.0 2907.0,1258.2 2909.6,1265.9 2916.4,1266.7 2922.4,1265.0" fill="none" stroke="#D6D1DD" stroke-width="4.5" stroke-dasharray="4.5 4"/></svg>
<svg style="position:absolute;left:51px;top:154px;overflow:visible" width="36" height="36" viewBox="0 0 36 36" fill="none" stroke="#9a8cab" stroke-width="3" stroke-linecap="round" stroke-linejoin="round"><rect x="1.5" y="1.5" width="33" height="33" rx="5"/><path d="M1.5 8 H34.5 M1.5 15 H34.5 M1.5 21.5 H9 V27 H27 V21.5 H34.5"/></svg>
<svg style="position:absolute;left:51px;top:216px;overflow:visible" width="36" height="36" viewBox="0 0 36 36" fill="none" stroke="#9a8cab" stroke-width="3" stroke-linecap="round" stroke-linejoin="round"><path d="M1.5 34.5 V1.5 H15 L20 7 H34.5 V34.5 Z M14 16 L9 21 L14 26 M22 16 L27 21 L22 26"/></svg>
<svg style="position:absolute;left:51px;top:310px;overflow:visible" width="36" height="36" viewBox="0 0 36 36" fill="none" stroke="#9a8cab" stroke-width="3" stroke-linecap="round" stroke-linejoin="round"><circle cx="14" cy="14" r="12.5"/><path d="M23 23 L34.5 34.5"/></svg>
<svg style="position:absolute;left:51px;top:372px;overflow:visible" width="36" height="36" viewBox="0 0 36 36" fill="none" stroke="#9a8cab" stroke-width="3" stroke-linecap="round" stroke-linejoin="round"><path d="M1.5 18 L10 34.5 L26.5 2 L34.5 19"/></svg>
<svg style="position:absolute;left:51px;top:714px;overflow:visible" width="36" height="36" viewBox="0 0 36 36" fill="none" stroke="#9a8cab" stroke-width="3" stroke-linecap="round" stroke-linejoin="round"><path d="M26.4 1.5 L4.7 16.5 L13 21.5 L6.8 34.4 L29.4 19.1 L20.6 14 Z"/></svg>
<svg style="position:absolute;left:51px;top:776px;overflow:visible" width="36" height="36" viewBox="0 0 36 36" fill="none" stroke="#9a8cab" stroke-width="3" stroke-linecap="round" stroke-linejoin="round"><path d="M1.5 6 H15 L21.5 1.5 H29 V26.5 H21.5 L15 20 H1.5 Z M29 7 A6.5 6.5 0 0 1 29 20 M3 20 V34.5 H13 V20"/></svg>
<svg style="position:absolute;left:51px;top:838px;overflow:visible" width="36" height="36" viewBox="0 0 36 36" fill="none" stroke="#9a8cab" stroke-width="3" stroke-linecap="round" stroke-linejoin="round"><path d="M3.5 12 A16 16 0 1 1 5 26 M2 34 V25 H11 M18 8 V18 L25 25"/></svg>
<svg style="position:absolute;left:51px;top:900px;overflow:visible" width="36" height="36" viewBox="0 0 36 36" fill="none" stroke="#9a8cab" stroke-width="3" stroke-linecap="round" stroke-linejoin="round"><path d="M1.5 27 H34.5 V34.5 H1.5 Z M6 27 L9 12.5 Q9.8 9.5 13 9.5 H23 Q26.2 9.5 27 12.5 L30 27 M18 22.3 V27 M18 1.2 V5.5 M6.5 2.5 L9.2 6.5 M29.5 2.5 L26.8 6.5 M1.2 12 H5 M31 12 H34.8"/><circle cx="18" cy="19" r="3.2"/></svg>
<svg style="position:absolute;left:51px;top:962px;overflow:visible" width="36" height="36" viewBox="0 0 36 36" fill="none" stroke="#9a8cab" stroke-width="3" stroke-linecap="round" stroke-linejoin="round"><rect x="1.5" y="1.5" width="12.5" height="33" rx="3"/><rect x="21" y="1.5" width="13.5" height="17" rx="3"/><rect x="21" y="24" width="13.5" height="10.5" rx="3"/></svg>
<svg style="position:absolute;left:51px;top:1024px;overflow:visible" width="36" height="36" viewBox="0 0 36 36" fill="none" stroke="#9a8cab" stroke-width="3" stroke-linecap="round" stroke-linejoin="round"><path d="M7 7 V3.5 Q7 1.5 9 1.5 H27 Q29 1.5 29 3.5 V7 M4 11 V9 Q4 7 6 7 H30 Q32 7 32 9 V11"/><rect x="1.5" y="11" width="33" height="23.5" rx="3"/></svg>
<svg style="position:absolute;left:51px;top:1118px;overflow:visible" width="36" height="36" viewBox="0 0 36 36" fill="none" stroke="#9a8cab" stroke-width="3" stroke-linecap="round" stroke-linejoin="round"><rect x="1.5" y="1.5" width="33" height="33" rx="5"/><path d="M8 33 V21 M14.5 33 V21 M21 33 V17.5 M27.5 33 V10"/></svg>
<svg style="position:absolute;left:51px;top:1180px;overflow:visible" width="36" height="36" viewBox="0 0 36 36" fill="none" stroke="#9a8cab" stroke-width="3" stroke-linecap="round" stroke-linejoin="round"><path d="M33.80 18.00 L33.79 18.52 L33.77 19.03 L33.49 19.53 L32.92 19.96 L32.25 20.35 L31.53 20.69 L30.81 20.99 L30.12 21.25 L29.51 21.49 L29.17 21.79 L29.04 22.16 L28.90 22.52 L28.75 22.87 L28.58 23.22 L28.61 23.67 L28.87 24.27 L29.17 24.95 L29.47 25.67 L29.74 26.42 L29.94 27.16 L30.03 27.88 L29.88 28.42 L29.53 28.80 L29.17 29.17 L28.80 29.53 L28.42 29.88 L27.88 30.03 L27.16 29.94 L26.42 29.74 L25.67 29.47 L24.95 29.17 L24.28 28.87 L23.67 28.61 L23.22 28.58 L22.87 28.75 L22.52 28.90 L22.16 29.04 L21.79 29.17 L21.49 29.51 L21.25 30.12 L20.99 30.81 L20.69 31.53 L20.35 32.25 L19.96 32.92 L19.53 33.49 L19.03 33.77 L18.52 33.79 L18.00 33.80 L17.48 33.79 L16.97 33.77 L16.47 33.49 L16.04 32.92 L15.65 32.25 L15.31 31.53 L15.01 30.81 L14.75 30.12 L14.51 29.51 L14.21 29.17 L13.84 29.04 L13.48 28.90 L13.13 28.75 L12.78 28.58 L12.33 28.61 L11.73 28.87 L11.05 29.17 L10.33 29.47 L9.58 29.74 L8.84 29.94 L8.12 30.03 L7.58 29.88 L7.20 29.53 L6.83 29.17 L6.47 28.80 L6.12 28.42 L5.97 27.88 L6.06 27.16 L6.26 26.42 L6.53 25.67 L6.83 24.95 L7.13 24.27 L7.39 23.67 L7.42 23.22 L7.25 22.87 L7.10 22.52 L6.96 22.16 L6.83 21.79 L6.49 21.49 L5.88 21.25 L5.19 20.99 L4.47 20.69 L3.75 20.35 L3.08 19.96 L2.51 19.53 L2.23 19.03 L2.21 18.52 L2.20 18.00 L2.21 17.48 L2.23 16.97 L2.51 16.47 L3.08 16.04 L3.75 15.65 L4.47 15.31 L5.19 15.01 L5.88 14.75 L6.49 14.51 L6.83 14.21 L6.96 13.84 L7.10 13.48 L7.25 13.13 L7.42 12.78 L7.39 12.33 L7.13 11.73 L6.83 11.05 L6.53 10.33 L6.26 9.58 L6.06 8.84 L5.97 8.12 L6.12 7.58 L6.47 7.20 L6.83 6.83 L7.20 6.47 L7.58 6.12 L8.12 5.97 L8.84 6.06 L9.58 6.26 L10.33 6.53 L11.05 6.83 L11.72 7.13 L12.33 7.39 L12.78 7.42 L13.13 7.25 L13.48 7.10 L13.84 6.96 L14.21 6.83 L14.51 6.49 L14.75 5.88 L15.01 5.19 L15.31 4.47 L15.65 3.75 L16.04 3.08 L16.47 2.51 L16.97 2.23 L17.48 2.21 L18.00 2.20 L18.52 2.21 L19.03 2.23 L19.53 2.51 L19.96 3.08 L20.35 3.75 L20.69 4.47 L20.99 5.19 L21.25 5.88 L21.49 6.49 L21.79 6.83 L22.16 6.96 L22.52 7.10 L22.87 7.25 L23.22 7.42 L23.67 7.39 L24.28 7.13 L24.95 6.83 L25.67 6.53 L26.42 6.26 L27.16 6.06 L27.88 5.97 L28.42 6.12 L28.80 6.47 L29.17 6.83 L29.53 7.20 L29.88 7.58 L30.03 8.12 L29.94 8.84 L29.74 9.58 L29.47 10.33 L29.17 11.05 L28.87 11.72 L28.61 12.33 L28.58 12.78 L28.75 13.13 L28.90 13.48 L29.04 13.84 L29.17 14.21 L29.51 14.51 L30.12 14.75 L30.81 15.01 L31.53 15.31 L32.25 15.65 L32.92 16.04 L33.49 16.47 L33.77 16.97 L33.79 17.48Z"/><circle cx="18" cy="18" r="4.6"/></svg>
<svg style="position:absolute;left:51px;top:1488px;overflow:visible" width="36" height="36" viewBox="0 0 36 36" fill="none" stroke="#9a8cab" stroke-width="3" stroke-linecap="round" stroke-linejoin="round"><circle cx="18" cy="18" r="16.5"/><path d="M13.2 14.2 A5 5 0 1 1 20.2 18.4 Q18.3 19.5 18.3 22" stroke-width="3.3"/><circle cx="18.3" cy="26.3" r="1.7" fill="#9a8cab" stroke="none"/></svg>
<svg style="position:absolute;left:51px;top:1550px;overflow:visible" width="36" height="36" viewBox="0 0 36 36" fill="none" stroke="#9a8cab" stroke-width="3" stroke-linecap="round" stroke-linejoin="round"><circle cx="18" cy="17.5" r="4"/><path d="M11 10 A10 10 0 0 0 11 25 M25 10 A10 10 0 0 1 25 25 M6 4 A18 18 0 0 0 6 31 M30 4 A18 18 0 0 1 30 31"/></svg>
<svg style="position:absolute;left:362px;top:324px;overflow:visible" width="16" height="9" viewBox="0 0 16 9" fill="none" stroke="#9a8cab" stroke-width="3" stroke-linecap="round" stroke-linejoin="round"><path d="M1.5 1.5 L8.0 7.5 L14.5 1.5"/></svg>
<svg style="position:absolute;left:362px;top:385px;overflow:visible" width="16" height="9" viewBox="0 0 16 9" fill="none" stroke="#9a8cab" stroke-width="3" stroke-linecap="round" stroke-linejoin="round"><path d="M1.5 7.5 L8.0 1.5 L14.5 7.5"/></svg>
<svg style="position:absolute;left:957.5px;top:293.5px;overflow:visible" width="18" height="11" viewBox="0 0 18 11" fill="none" stroke="#8a7f97" stroke-width="2.7" stroke-linecap="round" stroke-linejoin="round"><path d="M1.5 1.5 L9.0 9.5 L16.5 1.5"/></svg>
<svg style="position:absolute;left:1152.5px;top:293.5px;overflow:visible" width="18" height="11" viewBox="0 0 18 11" fill="none" stroke="#8a7f97" stroke-width="2.7" stroke-linecap="round" stroke-linejoin="round"><path d="M1.5 1.5 L9.0 9.5 L16.5 1.5"/></svg>
<svg style="position:absolute;left:1275.5px;top:293.5px;overflow:visible" width="18" height="11" viewBox="0 0 18 11" fill="none" stroke="#8a7f97" stroke-width="2.7" stroke-linecap="round" stroke-linejoin="round"><path d="M1.5 1.5 L9.0 9.5 L16.5 1.5"/></svg>
<svg style="position:absolute;left:770.5px;top:409.6px;overflow:visible" width="18" height="11" viewBox="0 0 18 11" fill="none" stroke="#80708F" stroke-width="3" stroke-linecap="round" stroke-linejoin="round"><path d="M1.5 1.5 L9.0 9.5 L16.5 1.5"/></svg>
<svg style="position:absolute;left:2108.5px;top:409.6px;overflow:visible" width="18" height="11" viewBox="0 0 18 11" fill="none" stroke="#80708F" stroke-width="3" stroke-linecap="round" stroke-linejoin="round"><path d="M1.5 1.5 L9.0 9.5 L16.5 1.5"/></svg>
<svg style="position:absolute;left:1653px;top:534.6px;overflow:visible" width="21" height="11" viewBox="0 0 21 11" fill="none" stroke="#9d93aa" stroke-width="2.3" stroke-linecap="round" stroke-linejoin="round"><path d="M1.5 9.5 L10.5 1.5 L19.5 9.5"/></svg>
<svg style="position:absolute;left:2902px;top:534.6px;overflow:visible" width="21" height="11" viewBox="0 0 21 11" fill="none" stroke="#9d93aa" stroke-width="2.3" stroke-linecap="round" stroke-linejoin="round"><path d="M1.5 9.5 L10.5 1.5 L19.5 9.5"/></svg>
<svg style="position:absolute;left:2902px;top:907px;overflow:visible" width="21" height="11" viewBox="0 0 21 11" fill="none" stroke="#3E3446" stroke-width="2.3" stroke-linecap="round" stroke-linejoin="round"><path d="M1.5 1.5 L10.5 9.5 L19.5 1.5"/></svg>
<svg style="position:absolute;left:2902px;top:981px;overflow:visible" width="21" height="11" viewBox="0 0 21 11" fill="none" stroke="#3E3446" stroke-width="2.3" stroke-linecap="round" stroke-linejoin="round"><path d="M1.5 1.5 L10.5 9.5 L19.5 1.5"/></svg>
<svg style="position:absolute;left:923.4px;top:1097px;overflow:visible" width="18" height="11" viewBox="0 0 18 11" fill="none" stroke="#80708F" stroke-width="3" stroke-linecap="round" stroke-linejoin="round"><path d="M1.5 1.5 L9.0 9.5 L16.5 1.5"/></svg>
<svg style="position:absolute;left:1584.8px;top:1097px;overflow:visible" width="18" height="11" viewBox="0 0 18 11" fill="none" stroke="#80708F" stroke-width="3" stroke-linecap="round" stroke-linejoin="round"><path d="M1.5 1.5 L9.0 9.5 L16.5 1.5"/></svg>
<svg style="position:absolute;left:2413px;top:1097px;overflow:visible" width="18" height="11" viewBox="0 0 18 11" fill="none" stroke="#80708F" stroke-width="3" stroke-linecap="round" stroke-linejoin="round"><path d="M1.5 1.5 L9.0 9.5 L16.5 1.5"/></svg>
<svg style="position:absolute;left:1398px;top:284px;overflow:visible" width="28" height="28" viewBox="0 0 28 28" fill="none" stroke="#80708F" stroke-width="3" stroke-linecap="round" stroke-linejoin="round"><circle cx="11.5" cy="11.5" r="9.5"/><path d="M18.5 18.5 L26 26"/></svg>
<svg style="position:absolute;left:2912px;top:288px;overflow:visible" width="20" height="20" viewBox="0 0 20 20" fill="none" stroke="#80708F" stroke-width="3" stroke-linecap="round" stroke-linejoin="round"><path d="M1.5 1.5 L18.5 18.5 M18.5 1.5 L1.5 18.5"/></svg>
<svg style="position:absolute;left:1983px;top:1442px;overflow:visible" width="22" height="25" viewBox="0 0 22 25" fill="none" stroke="#80708F" stroke-width="2.4" stroke-linecap="round" stroke-linejoin="round"><path d="M11 1.5 V23 M2 14 L11 23 L20 14"/></svg>
<div style="position:absolute;left:2772px;top:1467px;width:157px;height:0;border-top:2px dotted #80708F"></div>
<svg style="position:absolute;left:546px;top:1438px" width="32" height="30" viewBox="0 0 24 23"><path d="M12 1 L15 8 L22.5 8.7 L16.8 13.7 L18.6 21.3 L12 17.3 L5.4 21.3 L7.2 13.7 L1.5 8.7 L9 8 Z" fill="#F2B171" stroke="#F2B171" stroke-width="1.5" stroke-linejoin="round"/></svg>
<svg style="position:absolute;left:546px;top:1527px" width="32" height="30" viewBox="0 0 24 23"><path d="M12 1.5 L15 8.3 L22.3 9 L16.8 13.9 L18.4 21 L12 17.3 L5.6 21 L7.2 13.9 L1.7 9 L9 8.3 Z" fill="none" stroke="#D4CEDC" stroke-width="1.4" stroke-linejoin="round"/></svg>
<svg style="position:absolute;left:1394px;top:1528px" width="32" height="32" viewBox="0 0 16 16"><rect width="16" height="16" rx="3" fill="#5aa75e"/><path d="M1.2 11.1 A6.8 6.4 0 0 1 14.8 11.1 Z" fill="#fff"/><path d="M5.2 6.3 L3.4 3.2 M10.8 6.3 L12.6 3.2" stroke="#fff" stroke-width="1.0" stroke-linecap="round"/><circle cx="4.8" cy="8.6" r="0.55" fill="#5aa75e"/><circle cx="11.2" cy="8.6" r="0.55" fill="#5aa75e"/></svg>
<svg style="position:absolute;left:2682px;top:1532px;overflow:visible" width="24" height="25" viewBox="0 0 24 25" fill="none" stroke="#3E3446" stroke-width="2.2" stroke-linecap="round" stroke-linejoin="round"><ellipse cx="12" cy="8.2" rx="5" ry="6.5"/><path d="M1.5 23.5 V20.5 Q1.5 15 7 15 H17 Q22.5 15 22.5 20.5 V23.5 Z"/></svg>
<script>(function(){var w=window.innerWidth||3024;var k=w/3024;if(Math.abs(k-1)>0.002){document.body.style.transformOrigin='0 0';document.body.style.transform='scale('+k+')';}})();</script>
</body></html>
